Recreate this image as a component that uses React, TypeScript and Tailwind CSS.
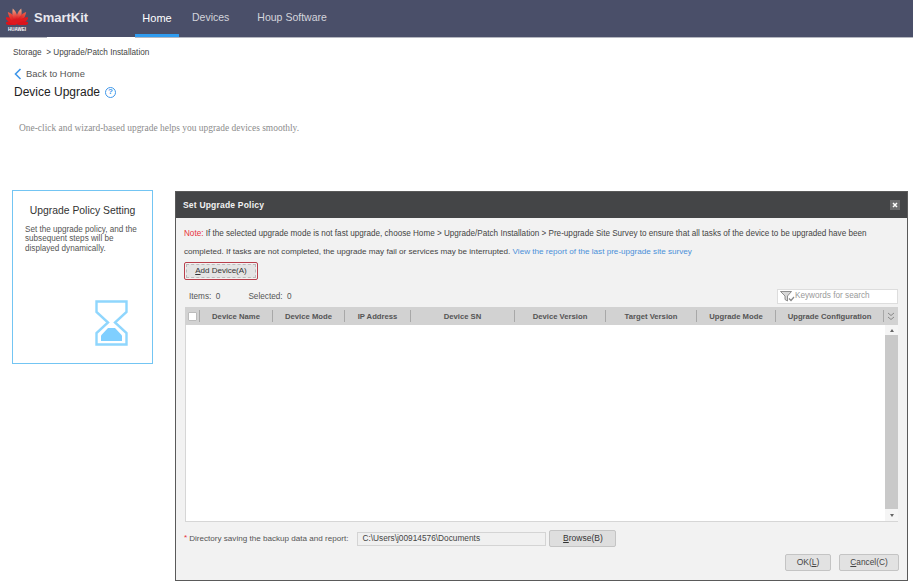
const sans = "font-['Liberation_Sans',Arial,sans-serif]";

function Logo() {
  const petals = [
    { a: -80, l: 0.82, c: "#d8141c" },
    { a: -56, l: 0.92, c: "#e0191f" },
    { a: -33, l: 1, c: "url(#hw-a)" },
    { a: -11, l: 1.06, c: "url(#hw-b)" },
    { a: 11, l: 1.06, c: "url(#hw-b)" },
    { a: 33, l: 1, c: "url(#hw-a)" },
    { a: 56, l: 0.92, c: "#e0191f" },
    { a: 80, l: 0.82, c: "#d8141c" },
  ];
  return (
    <svg width="22" height="18" viewBox="-11 -17 22 18" className="block">
      <defs>
        <linearGradient id="hw-a" x1="0" y1="1" x2="0" y2="0">
          <stop offset="0.35" stopColor="#dc1a20" />
          <stop offset="1" stopColor="#f0654c" />
        </linearGradient>
        <linearGradient id="hw-b" x1="0" y1="1" x2="0" y2="0">
          <stop offset="0.3" stopColor="#dc1a20" />
          <stop offset="1" stopColor="#f4b08c" />
        </linearGradient>
      </defs>
      {petals.map((p, i) => (
        <path
          key={i}
          d={`M0 0C-3 -${3 * p.l} -3.8 -${9 * p.l} -1.2 -${15 * p.l}C2.2 -${11 * p.l} 2.8 -${5 * p.l} 0 0Z`}
          fill={p.c}
          transform={`rotate(${p.a}) ${p.a > 0 ? "scale(-1 1)" : ""}`}
        />
      ))}
    </svg>
  );
}

function Hourglass() {
  return (
    <svg width="33" height="46" viewBox="0 0 33 46" fill="none" className="block">
      <path d="M1.5 1.5H31.5V12L20 22.5L31.5 33V44.5H1.5V33L13 22.5L1.5 12Z" stroke="#8fd6fd" strokeWidth="2.4" />
      <path d="M6 41V35.5L13 28H20L27 35.5V41Z" fill="#7fcfff" />
    </svg>
  );
}

function Filter() {
  return (
    <svg width="15" height="11" viewBox="0 0 15 11" className="block">
      <path d="M0.5 0.5H11.5L7.5 5V10L5 8.5V5Z" fill="#d8d8d8" stroke="#777" strokeWidth="0.8" />
      <path d="M9 7.5L11 9.5L14 6" fill="none" stroke="#888" strokeWidth="1.2" />
    </svg>
  );
}

const columns = [
  { label: "Device Name", w: "w-[73px]" },
  { label: "Device Mode", w: "w-[72px]" },
  { label: "IP Address", w: "w-[66px]" },
  { label: "Device SN", w: "w-[104px]" },
  { label: "Device Version", w: "w-[91px]" },
  { label: "Target Version", w: "w-[91px]" },
  { label: "Upgrade Mode", w: "w-[79px]" },
  { label: "Upgrade Configuration", w: "w-[108px]" },
];

export default function App() {
  return (
    <div className={`${sans} w-[913px] h-[588px] overflow-hidden bg-white text-[#333]`}>
      <header className="h-[37px] bg-[#4a4f69] flex items-stretch">
        <div className="w-[135px] flex items-center pl-[5px]">
          <div className="flex flex-col items-center w-[24px] mt-[1px]">
            <Logo />
            <span className="text-[4.5px] leading-[5px] text-white font-bold mt-[2px]">HUAWEI</span>
          </div>
          <span className="ml-[5px] text-[13px] font-bold text-[#e8e9ef] mt-[-1px]">SmartKit</span>
        </div>
        <div className="w-[44px] flex items-center justify-center text-[11px] text-white border-b-[3px] border-[#2f9cf0] pt-[2px]">Home</div>
        <div className="ml-[13px] text-[10.5px] text-[#d4d5dc] flex items-center pb-[1px]">Devices</div>
        <div className="ml-[28px] text-[10.5px] text-[#d4d5dc] flex items-center pb-[1px]">Houp Software</div>
      </header>
      <div className="h-[1px] flex bg-[#b5b7c0]">
        <div className="ml-[47px] w-[88px] bg-white" />
      </div>

      <div className="pl-[13px] pt-[9px] text-[8.2px] leading-[11px] text-[#444]">Storage&nbsp; &gt; Upgrade/Patch Installation</div>

      <div className="pl-[14px] mt-[9px] flex items-center h-[14px]">
        <svg width="8" height="12" viewBox="0 0 8 12" fill="none" className="block">
          <path d="M6.5 1L1.5 6L6.5 11" stroke="#3f97ea" strokeWidth="1.6" />
        </svg>
        <span className="ml-[4px] text-[9.4px] text-[#555]">Back to Home</span>
      </div>

      <div className="pl-[14px] mt-[1px] flex items-center h-[20px]">
        <span className="text-[12px] text-[#222]">Device Upgrade</span>
        <span className="ml-[5px] w-[11px] h-[11px] rounded-full border-[1.5px] border-[#3f97ea] text-[#3f97ea] text-[8px] leading-[8px] font-bold flex items-center justify-center">?</span>
      </div>

      <p className="pl-[19px] mt-[20px] font-['Liberation_Serif',serif] text-[9.45px] leading-[12px] text-[#8c8c8c]">
        One-click and wizard-based upgrade helps you upgrade devices smoothly.
      </p>

      <main className="mt-[56px] pl-[12px] flex items-start">
        <aside className="w-[141px] h-[174px] border border-[#73c5f3] px-[12px] flex flex-col">
          <h2 className="mt-[13px] text-[10.4px] leading-[13px] text-[#333] text-center whitespace-nowrap">Upgrade Policy Setting</h2>
          <p className="mt-[8px] text-[8.15px] leading-[9.4px] text-[#555] mr-[-2px]">
            Set the upgrade policy, and the subsequent steps will be displayed dynamically.
          </p>
          <div className="mt-auto mb-[17px] self-end mr-[12px]">
            <Hourglass />
          </div>
        </aside>

        <section className="mt-[1px] ml-[22px] w-[733px] h-[390px] border border-[#5a5a5a] bg-[#f2f2f2] flex flex-col">
          <div className="h-[26px] shrink-0 bg-[#444547] flex items-center justify-between pl-[7px] pr-[7px]">
            <h1 className="text-[8.5px] font-bold text-[#f2f2f2] tracking-[0.2px]">Set Upgrade Policy</h1>
            <span className="w-[10px] h-[10px] bg-[#6c6c6e] flex items-center justify-center">
              <svg width="6" height="6" viewBox="0 0 6 6" fill="none" className="block">
                <path d="M1 1L5 5M5 1L1 5" stroke="#fff" strokeWidth="1.5" />
              </svg>
            </span>
          </div>

          <div className="flex-1 flex flex-col pl-[8px] pr-[9px]">
            <p className="mt-[7px] text-[8.14px] leading-[17px] text-[#444] whitespace-nowrap">
              <span className="text-[#e8313a]">Note:</span> If the selected upgrade mode is not fast upgrade, choose Home &gt; Upgrade/Patch Installation &gt; Pre-upgrade Site Survey to ensure that all tasks of the device to be upgraded have been
            </p>
            <p className="mt-[1px] text-[8.12px] leading-[17px] text-[#444] whitespace-nowrap">
              completed. If tasks are not completed, the upgrade may fail or services may be interrupted. <span className="text-[#4a90d9]">View the report of the last pre-upgrade site survey</span>
            </p>

            <button className="mt-[2px] w-[74px] h-[18px] rounded-[2px] border border-[#b8404c] p-[1px] bg-[#f2f2f2]">
              <span className="h-full border border-dashed border-[#bbb] bg-[#e4e4e4] text-[8px] text-[#333] flex items-center justify-center">
                <span><span className="underline">A</span>dd Device(A)</span>
              </span>
            </button>

            <div className="mt-[8px] h-[17px] flex items-center text-[8.2px] text-[#555]">
              <span className="ml-[5px] pt-[1px]">Items:&nbsp; 0</span>
              <span className="ml-[28px] pt-[1px]">Selected:&nbsp; 0</span>
              <div className="ml-auto w-[121px] h-[15px] bg-white border border-[#ddd] flex items-center pl-[2px]">
                <Filter />
                <span className="text-[8.2px] text-[#999]">Keywords for search</span>
              </div>
            </div>

            <div className="ml-[1px] mt-[2px] w-[713px] h-[215px] flex flex-col border-b border-[#d6d6d6]">
              <div className="h-[18px] shrink-0 bg-[#d2d2d2] flex items-center">
                <div className="w-[15px] h-[12px] flex items-center pl-[3px] border-r border-[#a8a8a8]">
                  <span className="w-[9px] h-[9px] bg-white border border-[#bbb] rounded-[1px]" />
                </div>
                {columns.map((c) => (
                  <div key={c.label} className={`${c.w} h-[12px] pt-[2px] border-r border-[#a8a8a8] flex items-center justify-center text-[7.7px] font-bold text-[#555] whitespace-nowrap`}>
                    {c.label}
                  </div>
                ))}
                <div className="flex-1">
                  <svg width="8" height="9" viewBox="0 0 8 9" fill="none" className="block mx-auto">
                    <path d="M1 1L4 3.5L7 1M1 5L4 7.5L7 5" stroke="#888" strokeWidth="1" />
                  </svg>
                </div>
              </div>
              <div className="flex-1 flex min-h-0">
                <div className="flex-1 bg-white border-l border-[#d6d6d6]" />
                <div className="w-[13px] bg-[#f0f0f0] flex flex-col">
                  <div className="h-[10px] bg-[#f5f5f5] flex items-center justify-center">
                    <span className="w-0 h-0 border-x-[2.5px] border-x-transparent border-b-[3px] border-b-[#666]" />
                  </div>
                  <div className="flex-1 bg-[#c9c9c9]" />
                  <div className="h-[12px] bg-[#f5f5f5] flex items-center justify-center">
                    <span className="w-0 h-0 border-x-[2.5px] border-x-transparent border-t-[3px] border-t-[#666]" />
                  </div>
                </div>
              </div>
            </div>

            <div className="mt-[8px] h-[17px] flex items-center text-[8.1px] text-[#555]">
              <span className="text-[#e8313a] mr-[2px]">*</span>
              <span className="whitespace-nowrap pt-[1px]">Directory saving the backup data and report:</span>
              <div className="ml-[9px] w-[189px] h-[14px] border border-[#d4d4d4] bg-[#f0f0f0] pl-[4px] flex items-center text-[8.3px] text-[#444]">C:\Users\j00914576\Documents</div>
              <button className="ml-[3px] w-[67px] h-[17px] rounded-[2px] border border-[#c4c4c4] bg-[#dedede] text-[8.5px] text-[#333]">
                <span className="underline">B</span>rowse(B)
              </button>
            </div>

            <div className="mt-[7px] mr-[-1px] flex justify-end gap-[8px]">
              <button className="w-[46px] h-[17px] rounded-[2px] border border-[#c4c4c4] bg-[#e2e2e2] text-[8.5px] text-[#444]">
                OK(<span className="underline">L</span>)
              </button>
              <button className="w-[60px] h-[17px] rounded-[2px] border border-[#c4c4c4] bg-[#e2e2e2] text-[8.3px] text-[#444]">
                <span className="underline">C</span>ancel(C)
              </button>
            </div>
          </div>
        </section>
      </main>
    </div>
  );
}
